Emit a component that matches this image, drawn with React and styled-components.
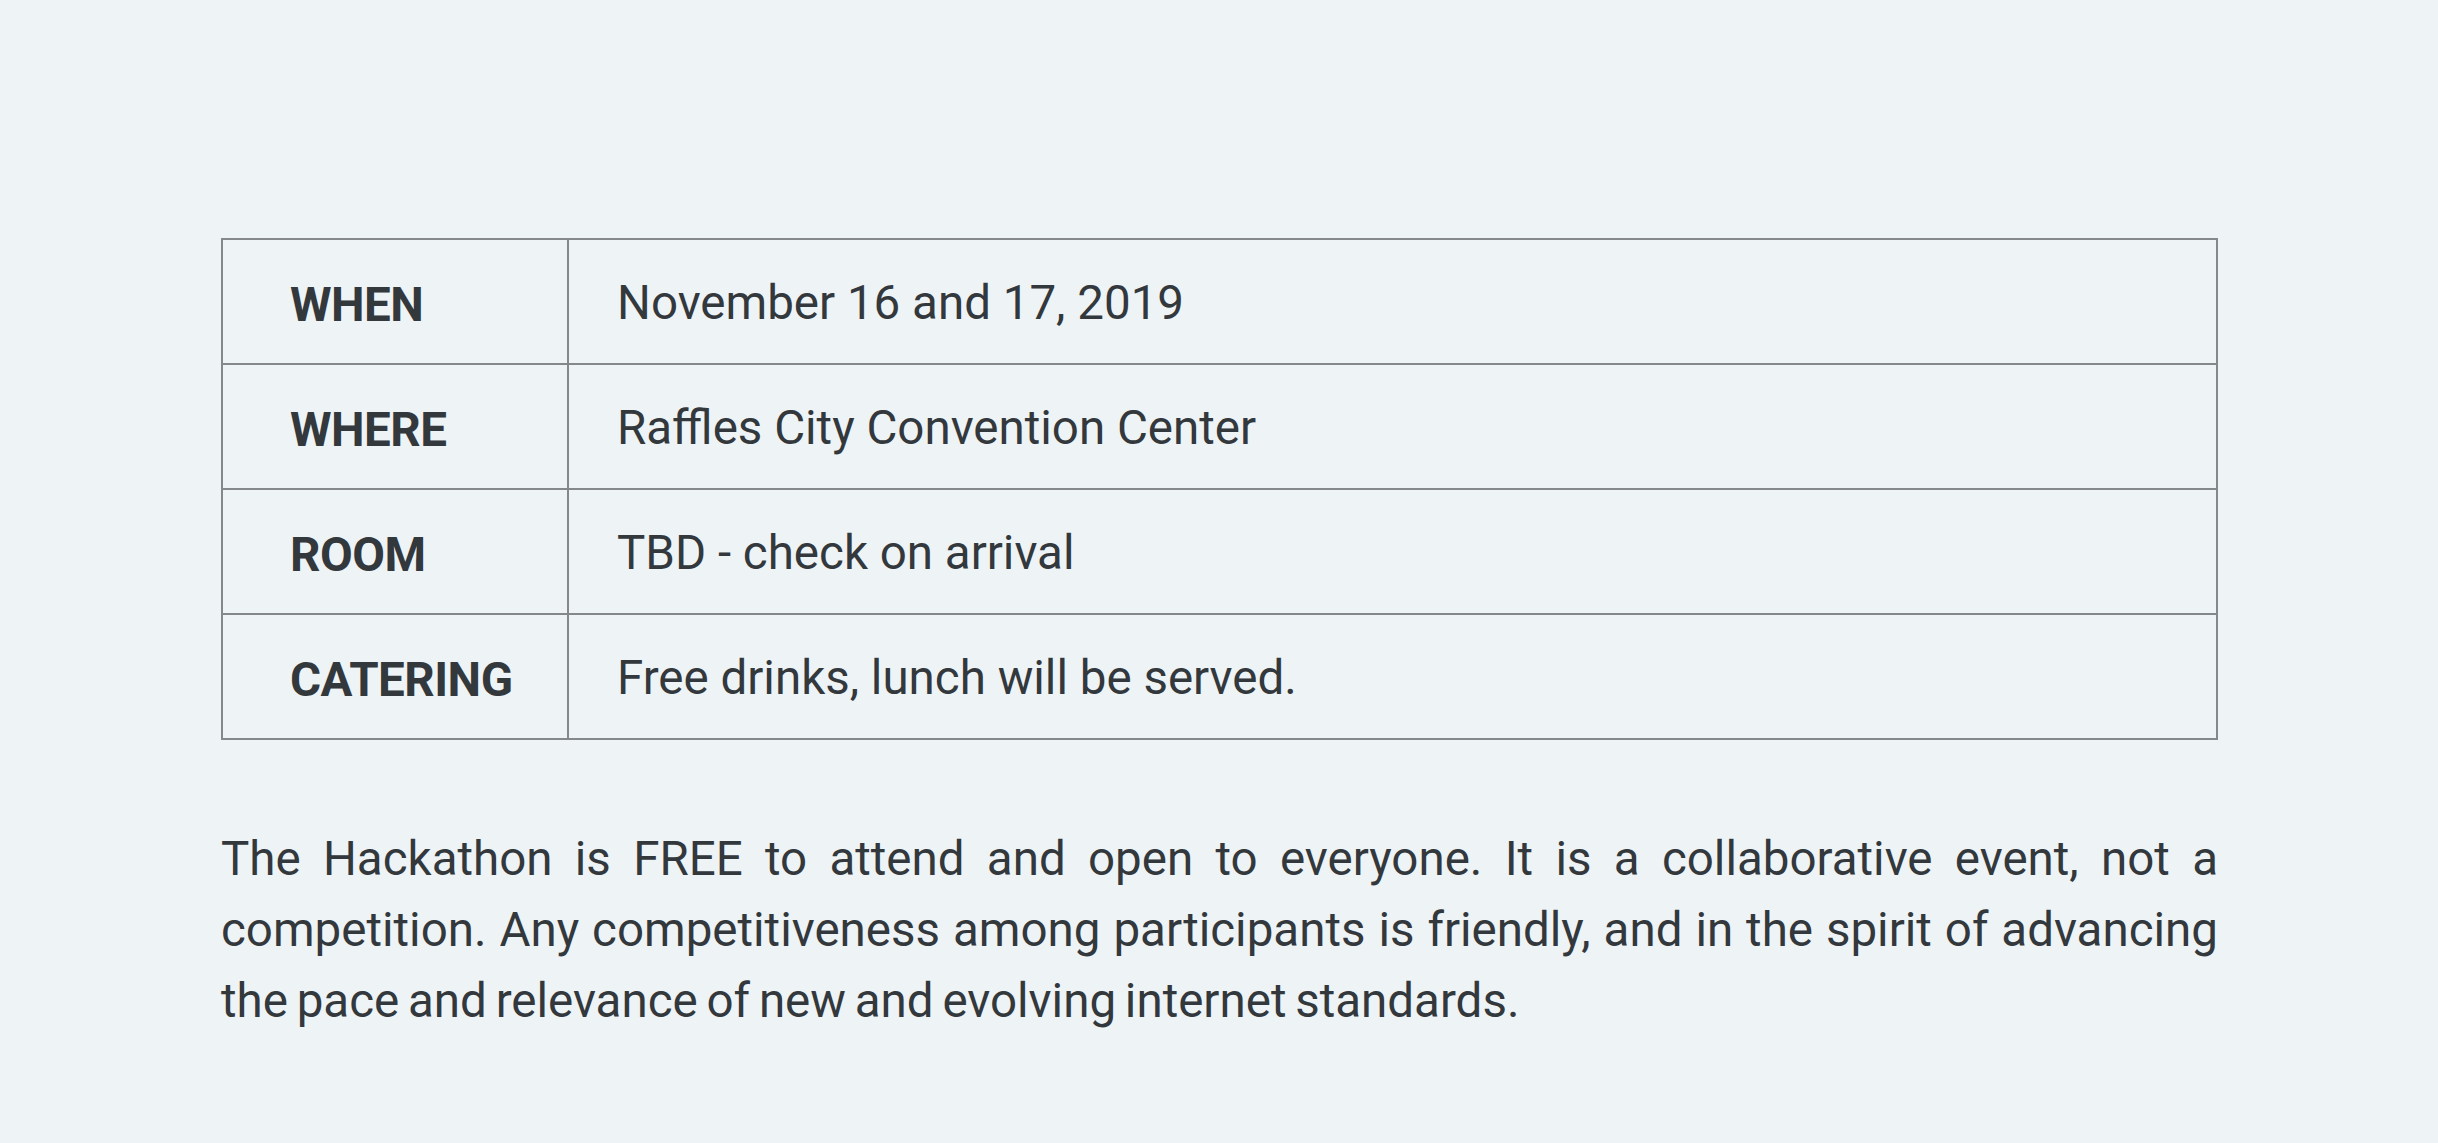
import React from "react";
import styled, { createGlobalStyle } from "styled-components";

const GlobalStyle = createGlobalStyle`
  body {
    margin: 0;
    background-color: #eef3f6;
    color: #33383d;
    font-family: Roboto, "Liberation Sans", sans-serif;
  }
`;

const details = [
  { label: "WHEN", value: "November 16 and 17, 2019" },
  { label: "WHERE", value: "Raffles City Convention Center" },
  { label: "ROOM", value: "TBD - check on arrival" },
  { label: "CATERING", value: "Free drinks, lunch will be served." },
];

export default function App() {
  return (
    <>
      <GlobalStyle />
      <Wrapper>
        <InfoTable>
          <tbody>
            {details.map((item) => (
              <Row key={item.label}>
                <Label>{item.label}</Label>
                <Value>{item.value}</Value>
              </Row>
            ))}
          </tbody>
        </InfoTable>
        <Intro>
          The Hackathon is FREE to attend and open to everyone. It is a
          collaborative event, not a competition. Any competitiveness among
          participants is friendly, and in the spirit of advancing the pace and
          relevance of new and evolving internet standards.
        </Intro>
      </Wrapper>
    </>
  );
}

const Wrapper = styled.div`
  padding: 238px 220px 0 221px;
  min-height: 100vh;
  box-sizing: border-box;
`;

const InfoTable = styled.table`
  width: 100%;
  border-collapse: collapse;
  border: 2px solid #84888b;
`;

const Row = styled.tr`
  height: 125px;
`;

const Label = styled.th`
  width: 277px;
  padding: 6px 0 0 67px;
  border: 2px solid #84888b;
  text-align: left;
  vertical-align: middle;
  font-size: 47.5px;
  font-weight: 700;
  letter-spacing: -0.5px;
`;

const Value = styled.td`
  padding: 3px 0 0 48px;
  border: 2px solid #84888b;
  vertical-align: middle;
  font-size: 47.5px;
  font-weight: 400;
`;

const Intro = styled.p`
  margin: 84px 0 0;
  font-size: 47.5px;
  line-height: 71px;
  text-align: justify;
  word-spacing: -3px;
`;
